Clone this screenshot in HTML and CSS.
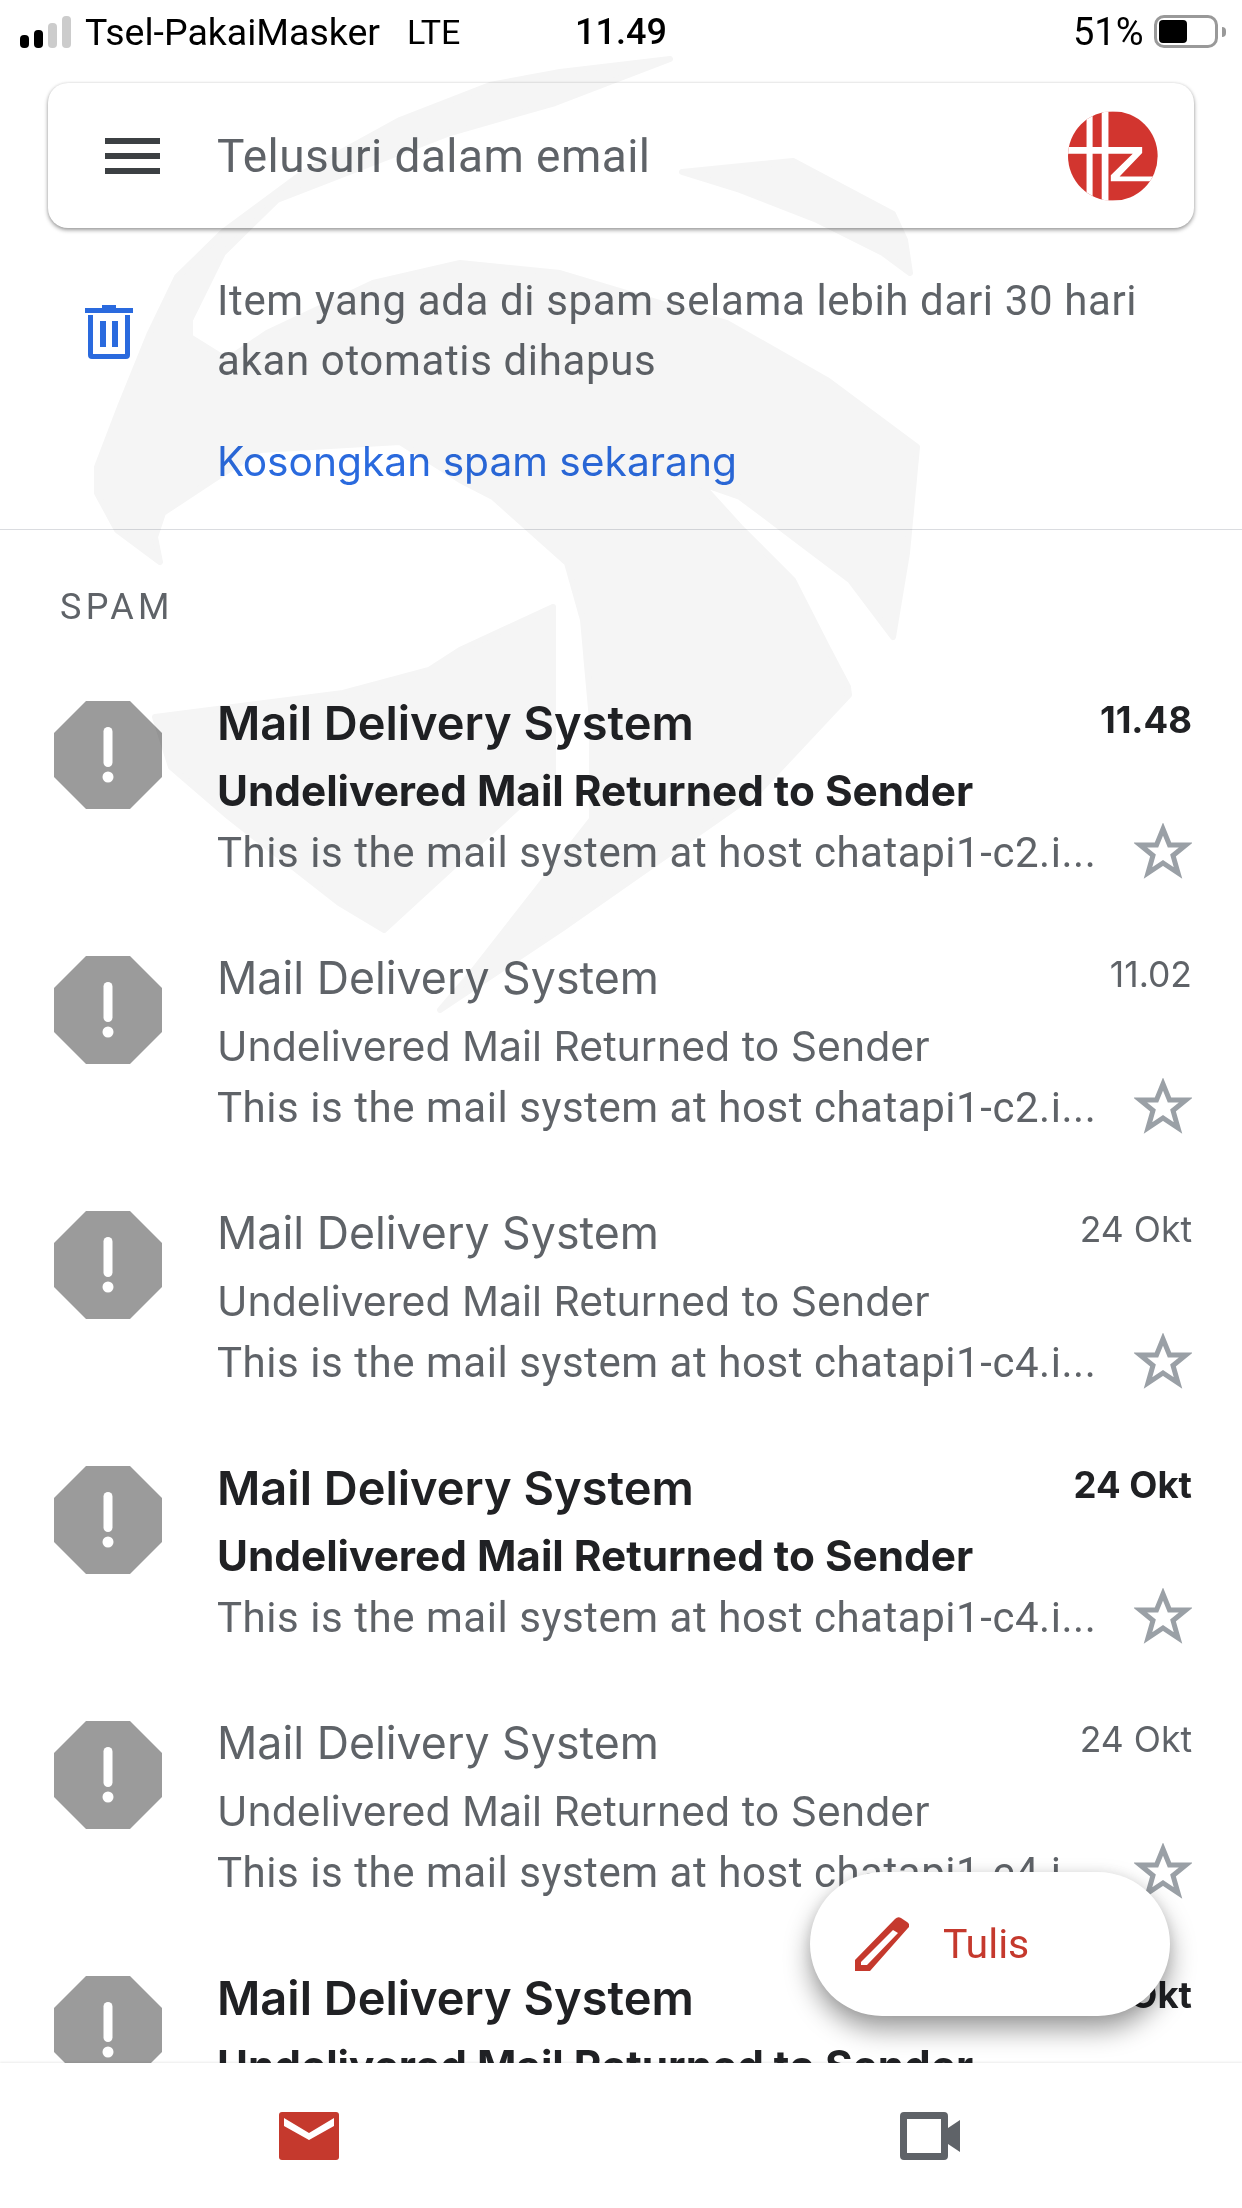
FILE: index.html
```html
<!DOCTYPE html>
<html lang="id">
<head>
    <meta charset="utf-8">
    <title>Spam</title>
    <link rel="stylesheet" href="styles.css">
</head>
<body>
    <svg width="0" height="0" class="defs">
        <symbol id="octagon" viewBox="0 0 108 108">
            <path fill="#9b9b9b" d="M32 0H76L108 32V76L76 108H32L0 76V32Z"/>
            <rect x="49.500" y="26" width="9" height="40" rx="4.500" fill="#fff"/>
            <circle cx="54" cy="76" r="5.500" fill="#fff"/>
        </symbol>
        <symbol id="star" viewBox="0 0 58 56">
            <path fill="none" stroke="#9aa0a6" stroke-width="5" d="M29 6L35.500 22H52L39 32.500L44 50L29 40L14 50L19 32.500L6 22H22.500Z"/>
        </symbol>
    </svg>

    <div class="phone">
        <div class="statusbar">
            <div class="signal"><i class="b1"></i><i class="b2"></i><i class="b3"></i><i class="b4"></i></div>
            <span class="carrier">Tsel-PakaiMasker</span>
            <span class="net">LTE</span>
            <span class="clock">11.49</span>
            <span class="percent">51%</span>
            <div class="battery"><div class="charge"></div></div>
            <div class="nub"></div>
        </div>

        <div class="search">
            <div class="burger"><i></i><i></i><i></i></div>
            <span class="search-text">Telusuri dalam email</span>
            <svg class="avatar" viewBox="85 65 267 264">
                <clipPath id="disc"><circle cx="218" cy="197" r="133"/></clipPath>
                <g clip-path="url(#disc)">
                    <rect x="85" y="65" width="267" height="264" fill="#d2352f"/>
                    <path fill="#fff" d="M140 60H158V335H140ZM185 60H205V335H185ZM80 170H305V188L238 258H340V272H212V254L277 190H80Z"/>
                </g>
            </svg>
        </div>

        <div class="notice">
            <svg class="trash" viewBox="0 0 48 54">
                <path fill="#2a6ade" d="M17 0H31V3H48V8H0V3H17ZM3 10H45V50Q45 54 41 54H7Q3 54 3 50ZM8 10V49H40V10ZM15 16H21V42H15ZM27 16H33V42H27Z" fill-rule="evenodd"/>
            </svg>
            <div class="notice-body">
                <p class="notice-text">Item yang ada di spam selama lebih dari 30 hari<br>akan otomatis dihapus</p>
                <a class="notice-link">Kosongkan spam sekarang</a>
            </div>
        </div>

        <div class="label">SPAM</div>

        <div class="list">
            <div class="row unread">
                <svg class="octagon"><use href="#octagon"/></svg>
                <div class="row-body">
                    <div class="line1"><span class="sender">Mail Delivery System</span><span class="time">11.48</span></div>
                    <div class="subject">Undelivered Mail Returned to Sender</div>
                    <div class="line3"><span class="snippet">This is the mail system at host chatapi1-c2.i...</span><svg class="star"><use href="#star"/></svg></div>
                </div>
            </div>
            <div class="row">
                <svg class="octagon"><use href="#octagon"/></svg>
                <div class="row-body">
                    <div class="line1"><span class="sender">Mail Delivery System</span><span class="time">11.02</span></div>
                    <div class="subject">Undelivered Mail Returned to Sender</div>
                    <div class="line3"><span class="snippet">This is the mail system at host chatapi1-c2.i...</span><svg class="star"><use href="#star"/></svg></div>
                </div>
            </div>
            <div class="row">
                <svg class="octagon"><use href="#octagon"/></svg>
                <div class="row-body">
                    <div class="line1"><span class="sender">Mail Delivery System</span><span class="time">24 Okt</span></div>
                    <div class="subject">Undelivered Mail Returned to Sender</div>
                    <div class="line3"><span class="snippet">This is the mail system at host chatapi1-c4.i...</span><svg class="star"><use href="#star"/></svg></div>
                </div>
            </div>
            <div class="row unread">
                <svg class="octagon"><use href="#octagon"/></svg>
                <div class="row-body">
                    <div class="line1"><span class="sender">Mail Delivery System</span><span class="time">24 Okt</span></div>
                    <div class="subject">Undelivered Mail Returned to Sender</div>
                    <div class="line3"><span class="snippet">This is the mail system at host chatapi1-c4.i...</span><svg class="star"><use href="#star"/></svg></div>
                </div>
            </div>
            <div class="row">
                <svg class="octagon"><use href="#octagon"/></svg>
                <div class="row-body">
                    <div class="line1"><span class="sender">Mail Delivery System</span><span class="time">24 Okt</span></div>
                    <div class="subject">Undelivered Mail Returned to Sender</div>
                    <div class="line3"><span class="snippet">This is the mail system at host chatapi1-c4.i...</span><svg class="star"><use href="#star"/></svg></div>
                </div>
            </div>
            <div class="row unread">
                <svg class="octagon"><use href="#octagon"/></svg>
                <div class="row-body">
                    <div class="line1"><span class="sender">Mail Delivery System</span><span class="time">24 Okt</span></div>
                    <div class="subject">Undelivered Mail Returned to Sender</div>
                    <div class="line3"><span class="snippet">This is the mail system at host chatapi1-c4.i...</span><svg class="star"><use href="#star"/></svg></div>
                </div>
            </div>
        </div>

        <div class="bottomnav">
            <svg class="nav-mail" viewBox="0 0 60 48">
                <rect width="60" height="48" rx="3" fill="#c5392d"/>
                <path fill="#fff" d="M5 6L30 21L55 6V14L30 28L5 14Z"/>
            </svg>
            <svg class="nav-video" viewBox="0 0 60 48">
                <path fill="#5f6368" fill-rule="evenodd" d="M4 0H44Q48 0 48 4V16L60 8V40L48 32V44Q48 48 44 48H4Q0 48 0 44V4Q0 0 4 0ZM7 7V41H41V7Z"/>
            </svg>
        </div>

        <div class="fab">
            <svg class="pencil" viewBox="0 0 54 54">
                <path fill="#c5392d" fill-rule="evenodd" d="M0 54V43L40 2Q43 -1 46 1L52 5Q56 8 53 11L15 54ZM6 45V48L12 48L43 16L38 13Z"/>
            </svg>
            <span class="fab-text">Tulis</span>
        </div>

        <!-- faint watermark lying over the whole screenshot -->
        <svg class="watermark" viewBox="0 0 1242 2208">
            <path d="M670 59L560 72L490 85L400 120L300 175L223 232L177 277L150 333L120 407L97 467L97 493L117 530L160 562L155 537L163 513L213 480L260 450L400 442L460 480L493 497L530 530L567 563L583 620L592 720V819L470 975L440 1010L560 930L760 790L849 695L848 687L827 647L793 580L740 527L700 483L740 497L793 537L850 580L893 637L907 553L917 447L827 380L727 323L560 273L460 263L373 283L267 333L227 360L190 337L190 320L223 253L277 200L450 133L555 103Z"/>
            <path d="M553 607L460 650L429 670L343 693L155 717L171 767L229 817L339 903L384 930L553 775Z"/>
            <path d="M682 172L793 161L893 214L905 240L910 273L883 253L817 220L740 190Z"/>
        </svg>
    </div>
</body>
</html>
```

FILE: styles.css
```css
html, body {
    margin: 0;
    padding: 0;
}

body {
    font-family: Roboto, "Liberation Sans", sans-serif;
    background: #fff;
}

p {
    margin: 0;
}

.defs {
    position: absolute;
}

.phone {
    position: relative;
    width: 1242px;
    height: 2208px;
    overflow: hidden;
    display: flex;
    flex-direction: column;
    background: #fff;
}

/* status bar */
.statusbar {
    display: flex;
    align-items: center;
    height: 60px;
    flex: none;
    padding: 3px 0 0 20px;
    box-sizing: border-box;
    color: #000;
    font-size: 34px;
}

.signal {
    display: flex;
    align-items: flex-end;
    gap: 5px;
    height: 32px;
    width: 65px;
}

.signal i {
    display: block;
    width: 9px;
    border-radius: 4px;
    background: #000;
}

.signal .b1 { height: 13px; }
.signal .b2 { height: 18px; }
.signal .b3 { height: 25px; background: #ccc; }
.signal .b4 { height: 32px; background: #ccc; }

.carrier {
    width: 322px;
    font-size: 37.500px;
}

.net {
    width: 168px;
}

.clock {
    width: 498px;
    font-weight: 500;
    font-size: 36px;
}

.percent {
    width: 81px;
    font-size: 38px;
}

.battery {
    width: 64px;
    height: 33px;
    box-sizing: border-box;
    border: 3px solid #999;
    border-radius: 10px;
    padding: 2px;
}

.charge {
    width: 28px;
    height: 23px;
    background: #000;
    border-radius: 4px;
}

.nub {
    width: 4px;
    height: 10px;
    margin-left: 4px;
    background: #999;
    border-radius: 0 4px 4px 0;
}

/* search */
.search {
    display: flex;
    align-items: center;
    flex: none;
    height: 145px;
    margin: 23px 48px 0;
    padding: 0 36px 0 57px;
    box-sizing: border-box;
    background: #fff;
    border-radius: 20px;
    box-shadow: 0 2px 4px rgba(0, 0, 0, .4), 0 0 3px rgba(0, 0, 0, .08);
}

.burger {
    display: flex;
    flex-direction: column;
    gap: 9px;
    width: 55px;
    margin-right: 57px;
}

.burger i {
    display: block;
    height: 6px;
    background: #3c4043;
}

.search-text {
    flex: 1;
    font-size: 46px;
    color: #5f6368;
    letter-spacing: .45px;
}

.avatar {
    width: 90px;
    height: 90px;
}

/* spam notice */
.notice {
    display: flex;
    flex: none;
    height: 302px;
    box-sizing: border-box;
    border-bottom: 1px solid #dadce0;
}

.trash {
    width: 48px;
    height: 54px;
    margin: 77px 0 0 85px;
}

.notice-body {
    margin: 43px 0 0 84px;
}

.notice-text {
    font-size: 42px;
    line-height: 60px;
    color: #5f6368;
    letter-spacing: .64px;
}

.notice-link {
    display: block;
    margin-top: 41px;
    font-family: Inter, Roboto, sans-serif;
    font-size: 40.700px;
    line-height: 60px;
    color: #2a6ade;
}

/* list */
.label {
    flex: none;
    margin: 47px 0 0 60px;
    height: 103px;
    font-size: 36px;
    line-height: 60px;
    letter-spacing: 4.300px;
    color: #5f6368;
}

.list {
    flex: 1;
    min-height: 0;
    overflow: hidden;
}

.row {
    display: flex;
    height: 255px;
    padding: 21px 50px 0 54px;
    box-sizing: border-box;
}

.octagon {
    flex: none;
    width: 108px;
    height: 108px;
    margin-right: 55px;
}

.row-body {
    flex: 1;
    min-width: 0;
}

.line1 {
    display: flex;
    justify-content: space-between;
    height: 68px;
    margin-top: -9px;
}

.sender {
    font-family: Inter, Roboto, sans-serif;
    font-size: 44.700px;
    line-height: 62px;
    color: #5f6368;
}

.time {
    font-family: Inter, Roboto, sans-serif;
    font-size: 35.500px;
    line-height: 56px;
    color: #5f6368;
}

.subject {
    font-family: Inter, Roboto, sans-serif;
    font-size: 41px;
    line-height: 60px;
    margin-top: 1px;
    color: #5f6368;
}

.line3 {
    display: flex;
    justify-content: space-between;
    height: 60px;
    margin-top: 2px;
}

.snippet {
    font-size: 42px;
    line-height: 60px;
    color: #5f6368;
    letter-spacing: .55px;
    white-space: nowrap;
}

.star {
    width: 58px;
    height: 56px;
    flex: none;
}

.unread .sender {
    color: #202124;
    font-weight: 600;
    font-size: 47px;
}

.unread .subject {
    color: #202124;
    font-weight: 700;
    font-size: 42.300px;
}

.unread .time {
    color: #202124;
    font-weight: 700;
    font-size: 36.500px;
}

/* bottom bar */
.bottomnav {
    flex: none;
    position: relative;
    z-index: 1;
    display: flex;
    height: 145px;
    box-sizing: border-box;
    padding: 49px 0 0 279px;
    background: #fff;
    box-shadow: 0 -1px 2px rgba(0, 0, 0, .08);
}

.nav-mail,
.nav-video {
    width: 60px;
    height: 48px;
}

.nav-mail {
    margin-right: 561px;
}

/* compose button */
.fab {
    position: absolute;
    z-index: 2;
    left: 810px;
    top: 1872px;
    width: 360px;
    height: 144px;
    display: flex;
    align-items: center;
    border-radius: 72px;
    background: #fff;
    box-shadow: 0 14px 26px rgba(0, 0, 0, .38), 0 0 12px rgba(0, 0, 0, .08);
}

.pencil {
    width: 54px;
    height: 54px;
    margin-left: 45px;
}

.fab-text {
    margin-left: 34px;
    font-size: 41px;
    color: #c5392d;
}

.watermark {
    position: absolute;
    z-index: 3;
    left: 0;
    top: 0;
    width: 1242px;
    height: 2208px;
    mix-blend-mode: multiply;
    pointer-events: none;
}

.watermark path {
    fill: #f5f5f5;
    stroke: #f5f5f5;
    stroke-width: 6px;
    stroke-linejoin: round;
}
```
